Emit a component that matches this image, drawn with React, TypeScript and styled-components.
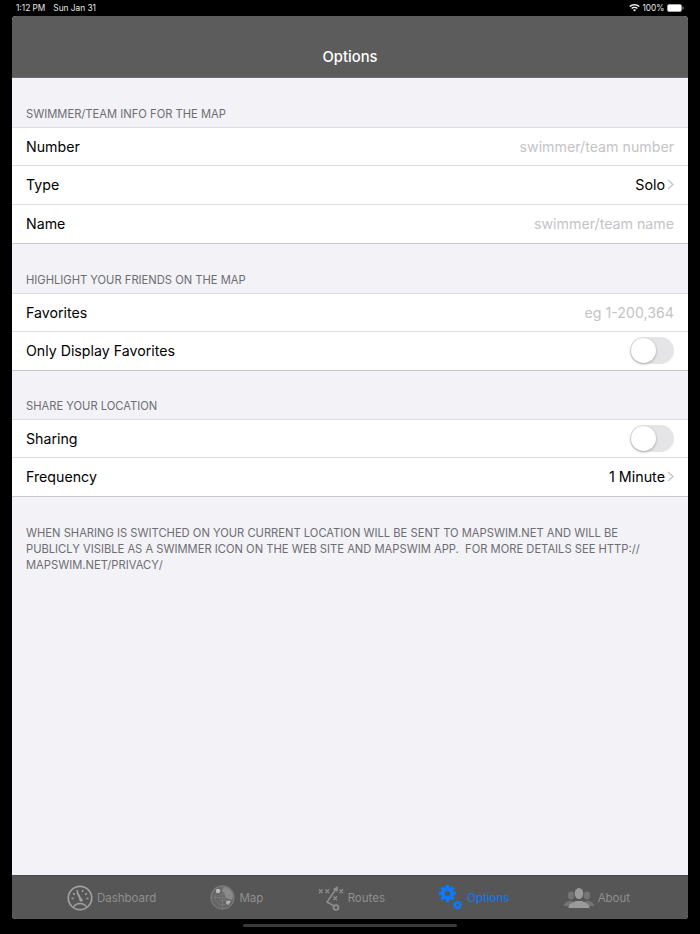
import styled, {createGlobalStyle} from "styled-components";
import {ReactNode} from "react";

const GlobalStyle = createGlobalStyle`
  html, body {
    margin: 0;
    padding: 0;
    background: #000;
  }

  body {
    font-family: Inter, "Liberation Sans", sans-serif;
    -webkit-font-smoothing: antialiased;
  }
`

const Page = styled.div`
  width: 700px;
  height: 934px;
  display: flex;
  flex-direction: column;
  background: #000;
  overflow: hidden;
`

const StatusBar = styled.div`
  height: 16px;
  flex: none;
  display: flex;
  align-items: center;
  justify-content: space-between;
  padding: 0 16px 0 16px;
  box-sizing: border-box;
  color: #e8e8e8;
  font-size: 8.3px;
`

const StatusGroup = styled.div`
  display: flex;
  align-items: center;
  gap: 2.500px;
`

const StatusTime = styled.span`
  margin-right: 5.500px;
`

const Screen = styled.div`
  flex: none;
  height: 903px;
  margin: 0 12px;
  display: flex;
  flex-direction: column;
  border-radius: 4px;
  overflow: hidden;
  background: #f2f2f7;
`

const NavBar = styled.header`
  height: 62px;
  flex: none;
  box-sizing: border-box;
  padding-top: 32px;
  background: #5c5c5c;
  border-bottom: 1px solid #6e6e6e;
  color: #fff;
  text-align: center;
  font-size: 14.800px;
  line-height: 18px;
  font-weight: 500;
`

const Content = styled.main`
  flex: 1;
  display: flex;
  flex-direction: column;
`

const SectionTitle = styled.h2<{ $top: number }>`
  margin: ${props => props.$top}px 0 0;
  padding: 0 14px;
  height: 16px;
  color: #6d6d72;
  font-size: 11.200px;
  font-weight: 400;
  line-height: 17px;
`

const Group = styled.section`
  margin-top: 5px;
  background: #fff;
  border-top: 1px solid #dedee2;
  border-bottom: 1px solid #c8c8cc;
`

const Row = styled.div`
  height: 39px;
  box-sizing: border-box;
  display: flex;
  align-items: center;
  justify-content: space-between;
  padding: 0 14px 2px;
  color: #000;
  font-size: 14.200px;

  &:first-child {
    height: 37px;
    padding-bottom: 1px;
  }

  & + & {
    border-top: 1px solid #dedee2;
  }
`

const Placeholder = styled.span`
  color: #c4c4c7;
  font-size: 14.200px;
`

const Value = styled.span`
  display: flex;
  align-items: center;
  gap: 2px;
  font-size: 14.300px;
`

const Toggle = styled.span`
  width: 44px;
  height: 27px;
  border-radius: 14px;
  background: #e5e5e7;
  display: flex;
  align-items: center;
  padding-left: 1px;
  box-sizing: border-box;
`

const Knob = styled.span`
  width: 25px;
  height: 25px;
  border-radius: 50%;
  background: #fff;
  box-shadow: 0 1px 3px rgba(0, 0, 0, .3);
`

const Footnote = styled.p`
  margin: 28px 0 0;
  padding: 0 14px;
  color: #6d6d72;
  font-size: 11.200px;
  line-height: 16px;
`

const TabBar = styled.nav`
  height: 44px;
  flex: none;
  display: flex;
  align-items: center;
  justify-content: center;
  gap: 54.250px;
  padding-right: 3px;
  background: #565656;
  border-top: 1px solid #4a4a4a;
  box-sizing: border-box;
`

const Tab = styled.div<{ $active?: boolean }>`
  display: flex;
  align-items: center;
  gap: 4px;
  color: ${props => props.$active ? "#0a7aff" : "#8f8f8f"};
  font-size: 11.500px;
`

const HomeIndicator = styled.div`
  width: 214px;
  height: 3px;
  margin: 5px auto 0;
  border-radius: 2px;
  background: #3a3a3a;
`

function Chevron() {
    return <svg width="7" height="11" viewBox="0 0 7 11" fill="none">
        <path d="M1 1l5 4.500L1 10" stroke="#c4c4c7" strokeWidth="1.300"/>
    </svg>
}

function Switch() {
    return <Toggle><Knob/></Toggle>
}

function Wifi() {
    return <svg width="11" height="8" viewBox="0 0 11 8" fill="#eee">
        <path d="M5.500 0C3.400 0 1.600.8.200 2.100l1 1C2.300 2 3.800 1.400 5.500 1.400s3.200.6 4.300 1.700l1-1C9.400.8 7.600 0 5.500 0z"/>
        <path d="M5.500 2.700c-1.300 0-2.500.5-3.400 1.400l1 1c.6-.6 1.500-1 2.400-1s1.800.4 2.400 1l1-1c-.9-.9-2.100-1.400-3.400-1.400z"/>
        <path d="M5.500 5.300c-.6 0-1.100.2-1.500.6L5.500 7.600 7 5.900c-.4-.4-.9-.6-1.500-.6z"/>
    </svg>
}

function Battery() {
    return <svg width="17" height="8" viewBox="0 0 17 8">
        <rect x="0.500" y="0.500" width="14" height="7" rx="1.500" fill="#fff" stroke="#bbb" strokeWidth=".6"/>
        <rect x="15.500" y="2.500" width="1" height="3" rx=".5" fill="#999"/>
    </svg>
}

function GaugeIcon() {
    return <svg width="26" height="26" viewBox="0 0 26 26" fill="none" stroke="#a0a0a0">
        <circle cx="13" cy="13" r="11.700" strokeWidth="1.700"/>
        <path d="M6.500 22c1.300-2.200 3.600-3.500 6.500-3.500s5.200 1.300 6.500 3.500" strokeWidth="1.400"/>
        <path d="M4.500 13.500h2.200M6 8.500l1.900 1M10 5l.7 2M16 5l-.7 2M20 8.500l-1.900 1M21.500 13.500h-2.200" strokeWidth="1.500"/>
        <path d="M10.500 8l3.500 7" strokeWidth="2" strokeLinecap="round"/>
        <circle cx="14" cy="15" r="1.700" fill="#a0a0a0" stroke="none"/>
    </svg>
}

function RadarIcon() {
    return <svg width="25" height="25" viewBox="0 0 25 25" fill="none" stroke="#7a7a7a" strokeWidth=".8">
        <circle cx="12.500" cy="12.500" r="11.500" fill="#666" strokeWidth="1.300"/>
        <circle cx="12.500" cy="12.500" r="7.500"/>
        <circle cx="12.500" cy="12.500" r="3.500"/>
        <path d="M1 12.500h23M12.500 1v23"/>
        <path d="M14 2c4.500.5 8.500 4 9 9l-1 4-3.500-1-3-1.500-1-4-2.500-2.500z" fill="#8a8a8a" stroke="none"/>
        <path d="M16.500 15.500l4.500.5-2.500 4-2.500-1.500z" fill="#b0b0b0" stroke="none"/>
        <circle cx="8" cy="6" r="2.200" fill="#bdbdbd" stroke="none"/>
    </svg>
}

function RoutesIcon() {
    return <svg width="26" height="26" viewBox="0 0 26 26" fill="none" stroke="#8f8f8f" strokeWidth="1.400">
        <path d="M1 4.500l3.500 3.500M4.500 4.500L1 8M7.500 4.500L11 8M11 4.500L7.500 8M21.500 4.500L25 8M25 4.500L21.500 8M15.500 11.500l3.500 3.500M19 11.500L15.500 15"/>
        <path d="M18 4l-9 13 7 4" strokeWidth="1.500"/>
        <path d="M20 1l-.5 6-4.500-3z" fill="#8f8f8f" stroke="none"/>
        <circle cx="18" cy="22.500" r="2.400" strokeWidth="1.800"/>
    </svg>
}

type GearProps = { cx: number, cy: number, outer: number, body: number, hole: number };

function Gear({cx, cy, outer, body, hole}: GearProps) {
    const teeth = [0, 45, 90, 135, 180, 225, 270, 315];
    const toothWidth = body * .5;
    return <g fill="#0a7aff">
        {teeth.map(angle => {
            return <rect key={angle} x={cx - toothWidth / 2} y={cy - outer} width={toothWidth} height={outer - body + 1}
                         transform={`rotate(${angle} ${cx} ${cy})`}/>;
        })}
        <circle cx={cx} cy={cy} r={(body + hole) / 2} fill="none" stroke="#0a7aff" strokeWidth={body - hole}/>
    </g>
}

function GearsIcon() {
    return <svg width="24" height="25" viewBox="0 0 24 25">
        <Gear cx={8.500} cy={8.500} outer={8.500} body={6.500} hole={2.800}/>
        <Gear cx={18.500} cy={20} outer={4.500} body={3.400} hole={1.400}/>
    </svg>
}

function PeopleIcon() {
    return <svg width="30" height="20" viewBox="0 0 30 20">
        <g fill="#747474">
            <ellipse cx="7" cy="7.500" rx="3.200" ry="4"/>
            <path d="M0 18c0-3.500 3-4 5-5l3 0 3 2-2 3.500z"/>
            <ellipse cx="23" cy="7.500" rx="3.200" ry="4"/>
            <path d="M30 18c0-3.500-3-4-5-5l-3 0-3 2 2 3.500z"/>
        </g>
        <g fill="#9a9a9a">
            <ellipse cx="15" cy="5.500" rx="4.300" ry="5.500"/>
            <path d="M4.500 20c0-4.500 4-5 7.500-7h6c3.500 2 7.500 2.500 7.500 7z"/>
        </g>
    </svg>
}

function Tabs({children, active, label}: { children: ReactNode, active?: boolean, label: string }) {
    return <Tab $active={active}>
        {children}
        <span>{label}</span>
    </Tab>
}

export default function App() {
    return <Page>
        <GlobalStyle/>
        <StatusBar>
            <StatusGroup>
                <StatusTime>1:12 PM</StatusTime>
                <span>Sun Jan 31</span>
            </StatusGroup>
            <StatusGroup>
                <Wifi/>
                <span>100%</span>
                <Battery/>
            </StatusGroup>
        </StatusBar>
        <Screen>
            <NavBar>Options</NavBar>
            <Content>
                <SectionTitle $top={28}>SWIMMER/TEAM INFO FOR THE MAP</SectionTitle>
                <Group>
                    <Row>Number<Placeholder>swimmer/team number</Placeholder></Row>
                    <Row>Type<Value>Solo<Chevron/></Value></Row>
                    <Row>Name<Placeholder>swimmer/team name</Placeholder></Row>
                </Group>
                <SectionTitle $top={28}>HIGHLIGHT YOUR FRIENDS ON THE MAP</SectionTitle>
                <Group>
                    <Row>Favorites<Placeholder>eg 1-200,364</Placeholder></Row>
                    <Row>Only Display Favorites<Switch/></Row>
                </Group>
                <SectionTitle $top={27}>SHARE YOUR LOCATION</SectionTitle>
                <Group>
                    <Row>Sharing<Switch/></Row>
                    <Row>Frequency<Value>1 Minute<Chevron/></Value></Row>
                </Group>
                <Footnote>
                    WHEN SHARING IS SWITCHED ON YOUR CURRENT LOCATION WILL BE SENT TO MAPSWIM.NET AND WILL BE
                    PUBLICLY VISIBLE AS A SWIMMER ICON ON THE WEB SITE AND MAPSWIM APP.&nbsp; FOR MORE DETAILS SEE HTTP://
                    MAPSWIM.NET/PRIVACY/
                </Footnote>
            </Content>
            <TabBar>
                <Tabs label="Dashboard"><GaugeIcon/></Tabs>
                <Tabs label="Map"><RadarIcon/></Tabs>
                <Tabs label="Routes"><RoutesIcon/></Tabs>
                <Tabs label="Options" active><GearsIcon/></Tabs>
                <Tabs label="About"><PeopleIcon/></Tabs>
            </TabBar>
        </Screen>
        <HomeIndicator/>
    </Page>
}
